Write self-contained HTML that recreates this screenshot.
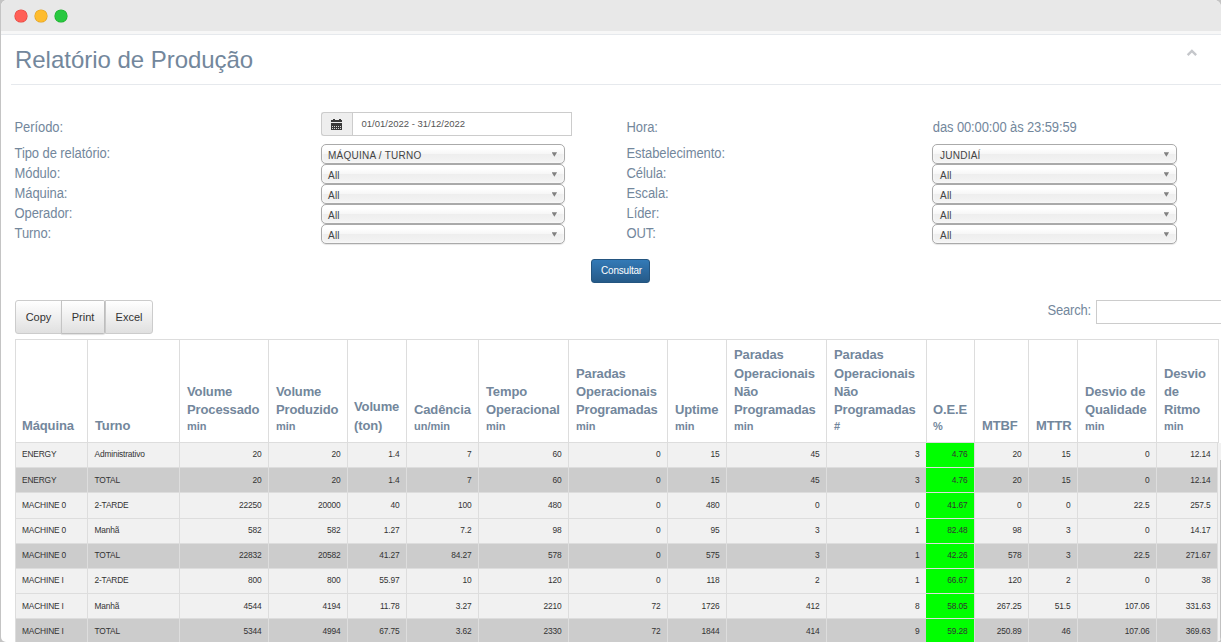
<!DOCTYPE html>
<html lang="pt-BR">
<head>
<meta charset="utf-8">
<title>Relatório de Produção</title>
<style>
*{box-sizing:border-box;margin:0;padding:0}
html,body{width:1221px;height:642px;overflow:hidden;background:#c4c4c4;font-family:"Liberation Sans",Arial,sans-serif;color:#73879C;font-size:13px}
#win{position:absolute;left:1px;top:0;width:1220px;height:642px;background:#fff;border-radius:6px 7px 5px 5px;overflow:hidden}
#chrome{position:absolute;left:0;top:0;width:100%;height:31px;background:#e8e8e8}
.dot{position:absolute;top:10px;width:12px;height:12px;border-radius:50%}
#strip{position:absolute;left:0;top:31px;width:100%;height:3px;background:#f7f7f7}
#ptop{position:absolute;left:0;top:34px;width:100%;height:1px;background:#E6E9ED}
#title{position:absolute;left:14px;top:46px;font-size:24px;line-height:28px;font-weight:400;color:#73879C;white-space:nowrap;letter-spacing:-0.03px}
#tline{position:absolute;left:10px;top:84px;right:0;height:1px;background:#E6E9ED}
#chev{position:absolute;left:1185px;top:48px}
.lbl{position:absolute;font-size:13px;line-height:16px;white-space:nowrap;color:#73879C;letter-spacing:-0.08px;margin:1px 0 0 .5px;transform:scaleY(1.075);transform-origin:0 12.3px}
.sel{position:absolute;width:244px;height:20px;border:1px solid #aaa;border-radius:5px;background:linear-gradient(#fff 20%,#f6f6f6 50%,#eee 52%,#f4f4f4 100%);box-shadow:0 0 3px #fff inset,0 1px 1px rgba(0,0,0,.1);color:#444;font-size:10px;line-height:22px;padding-left:6px;white-space:nowrap;letter-spacing:.24px}
.sel i{position:absolute;right:6.9px;top:7.3px;width:5.5px;height:4.4px;background:#808080;clip-path:polygon(0 0,100% 0,50% 100%)}
#dgrp{position:absolute;left:351px;top:112px;width:220px;height:24px;border:1px solid #ccc;background:#fff}
#dadd{position:absolute;left:320px;top:112px;width:31px;height:24px;background:#eee;border:1px solid #ccc;border-right:0;border-radius:3px 0 0 3px}
#dtxt{position:absolute;left:8.5px;top:0;font-size:9.5px;line-height:22px;color:#555;white-space:nowrap}
#btn{position:absolute;left:590px;top:259px;width:59px;height:24px;border:1px solid #245580;border-radius:3px;background:linear-gradient(#337ab7,#265a88);color:#fff;font-size:10px;letter-spacing:-.2px;padding-left:2px;line-height:22px;text-align:center}
.dtb{position:absolute;top:300px;height:34px;border:1px solid #ccc;background:linear-gradient(#fff,#e0e0e0);color:#333;font-size:11px;line-height:32px;text-align:center}
#srch{position:absolute;left:1046.6px;top:303px;font-size:13px;letter-spacing:-.2px;line-height:16px;color:#73879C;transform:scaleY(1.075);transform-origin:0 12.3px}
#sinp{position:absolute;left:1095px;top:300px;width:140px;height:24px;border:1px solid #ccc;background:#fff}
table{border-collapse:collapse;table-layout:fixed;position:absolute}
#th{left:14px;top:339px;width:1203px;z-index:2}
#tb{left:14px;top:442px;width:1202px}
th,td{border:1px solid #ddd;overflow:hidden}
th{height:103px;vertical-align:bottom;text-align:left;padding:0 0 6.5px 7px;font-size:13px;line-height:18.33px;font-weight:700;color:#73879C;white-space:nowrap;background:#fff;letter-spacing:-.13px}
th small{display:block;font-size:11px;line-height:13.2px;margin-bottom:2.6px;font-weight:700;letter-spacing:0}
td{height:25px;font-size:8.4px;letter-spacing:-.17px;line-height:12px;color:#333;padding:0 6.6px 1px 6px;text-align:right;white-space:nowrap;vertical-align:middle}
td.l{text-align:left}
tr.o td{background:#f1f1f1}
tr.f td{padding-top:0;padding-bottom:3px}
tr.h26 td{height:26px;padding-top:0;padding-bottom:2px}
td.l+td.l{padding-left:6.5px}
tr.t td{background:#ccc}
tr td.g{background:#00ff00}
#tb td:nth-child(11){border-right-color:#00ff00}
#rstrip{position:absolute;left:1217px;top:443px;width:3px;height:199px;background:#f1f1f1}
#thumb{position:absolute;left:1219px;top:460px;width:1px;height:182px;background:#c1c1c1}
</style>
</head>
<body>
<div id="win">
  <div id="chrome">
    <div class="dot" style="left:14px;background:#ff5f57;box-shadow:0 0 0 .6px #e0443e"></div>
    <div class="dot" style="left:34px;background:#febc2e;box-shadow:0 0 0 .6px #dea123"></div>
    <div class="dot" style="left:54px;background:#28c840;box-shadow:0 0 0 .6px #1aab29"></div>
  </div>
  <div id="strip"></div><div id="ptop"></div>
  <div id="title">Relatório de Produção</div>
  <svg id="chev" width="14" height="10" viewBox="0 0 14 10"><path d="M1.65 7.2 L5.9 3 L10.15 7.2" fill="none" stroke="#C5C7CB" stroke-width="2.4"/></svg>
  <div id="tline"></div>

  <div class="lbl" style="left:13px;top:119px">Período:</div>
  <div class="lbl" style="left:13px;top:145px">Tipo de relatório:</div>
  <div class="lbl" style="left:13px;top:165px">Módulo:</div>
  <div class="lbl" style="left:13px;top:185px">Máquina:</div>
  <div class="lbl" style="left:13px;top:205px">Operador:</div>
  <div class="lbl" style="left:13px;top:225px">Turno:</div>

  <div id="dadd"><svg width="11" height="11" viewBox="0 0 11 11" shape-rendering="crispEdges" style="position:absolute;left:9px;top:6px"><g fill="#3a3a3a"><rect x="1.5" y="0" width="2" height="1"/><rect x="7.5" y="0" width="2" height="1"/><rect x="0" y="1" width="11" height="2"/><rect x="0" y="4" width="11" height="7"/></g><g fill="#d8d8d8"><rect x="1" y="7" width="1" height="1"/><rect x="3" y="7" width="1" height="1"/><rect x="5" y="7" width="1" height="1"/><rect x="7" y="7" width="1" height="1"/><rect x="9" y="7" width="1" height="1"/><rect x="1" y="9" width="1" height="1"/><rect x="3" y="9" width="1" height="1"/><rect x="5" y="9" width="1" height="1"/><rect x="7" y="9" width="1" height="1"/><rect x="9" y="9" width="1" height="1"/></g></svg></div><div id="dgrp"><div id="dtxt">01/01/2022 - 31/12/2022</div></div>
  <div class="sel" style="left:320px;top:144px">MÁQUINA / TURNO<i></i></div>
  <div class="sel" style="left:320px;top:164px">All<i></i></div>
  <div class="sel" style="left:320px;top:184px">All<i></i></div>
  <div class="sel" style="left:320px;top:204px">All<i></i></div>
  <div class="sel" style="left:320px;top:224px">All<i></i></div>

  <div class="lbl" style="left:625px;top:119px">Hora:</div>
  <div class="lbl" style="left:625px;top:145px">Estabelecimento:</div>
  <div class="lbl" style="left:625px;top:165px">Célula:</div>
  <div class="lbl" style="left:625px;top:185px">Escala:</div>
  <div class="lbl" style="left:625px;top:205px">Líder:</div>
  <div class="lbl" style="left:625px;top:225px">OUT:</div>

  <div class="lbl" style="left:931.3px;top:119px;letter-spacing:-.12px">das 00:00:00 às 23:59:59</div>
  <div class="sel" style="left:931px;top:144px;width:245px;padding-left:7px">JUNDIAÍ<i></i></div>
  <div class="sel" style="left:931px;top:164px;width:245px;padding-left:7px">All<i></i></div>
  <div class="sel" style="left:931px;top:184px;width:245px;padding-left:7px">All<i></i></div>
  <div class="sel" style="left:931px;top:204px;width:245px;padding-left:7px">All<i></i></div>
  <div class="sel" style="left:931px;top:224px;width:245px;padding-left:7px">All<i></i></div>

  <div id="btn">Consultar</div>

  <div class="dtb" style="left:14px;width:47px;border-radius:3px 0 0 3px">Copy</div>
  <div class="dtb" style="left:60px;width:44px;border-color:#c4c4c4 #bdbdbd #bdbdbd #c4c4c4;border-radius:0 2px 2px 0;box-shadow:0 1px 1px rgba(0,0,0,.12);z-index:1">Print</div>
  <div class="dtb" style="left:104px;width:48px;border-radius:0 3px 3px 0">Excel</div>

  <div id="srch">Search:</div><div id="sinp"></div>

  <table id="th"><colgroup><col style="width:72px"><col style="width:92px"><col style="width:89px"><col style="width:79px"><col style="width:59px"><col style="width:72px"><col style="width:90px"><col style="width:99px"><col style="width:59px"><col style="width:100px"><col style="width:100px"><col style="width:48px"><col style="width:54px"><col style="width:49px"><col style="width:79px"><col style="width:62px"></colgroup>
  <tr>
    <th style="padding-left:6px">Máquina</th><th>Turno</th>
    <th>Volume<br>Processado<small>min</small></th>
    <th>Volume<br>Produzido<small>min</small></th>
    <th style="padding-left:6px"><span style="position:relative;top:-1px">Volume</span><br>(ton)</th>
    <th>Cadência<small>un/min</small></th>
    <th>Tempo<br>Operacional<small>min</small></th>
    <th>Paradas<br>Operacionais<br>Programadas<small>min</small></th>
    <th>Uptime<small>min</small></th>
    <th>Paradas<br>Operacionais<br>Não<br>Programadas<small>min</small></th>
    <th>Paradas<br>Operacionais<br>Não<br>Programadas<small>#</small></th>
    <th style="padding-left:6px">O.E.E<small>%</small></th>
    <th>MTBF</th><th>MTTR</th>
    <th>Desvio de<br>Qualidade<small>min</small></th>
    <th>Desvio<br>de<br>Ritmo<small>min</small></th>
  </tr></table>

  <table id="tb"><colgroup><col style="width:72px"><col style="width:92px"><col style="width:89px"><col style="width:79px"><col style="width:59px"><col style="width:72px"><col style="width:90px"><col style="width:99px"><col style="width:59px"><col style="width:100px"><col style="width:100px"><col style="width:48px"><col style="width:54px"><col style="width:49px"><col style="width:79px"><col style="width:61px"></colgroup>
  <tr class="o f"><td class="l">ENERGY</td><td class="l">Administrativo</td><td>20</td><td>20</td><td>1.4</td><td>7</td><td>60</td><td>0</td><td>15</td><td>45</td><td>3</td><td class="g">4.76</td><td>20</td><td>15</td><td>0</td><td>12.14</td></tr>
  <tr class="t"><td class="l">ENERGY</td><td class="l">TOTAL</td><td>20</td><td>20</td><td>1.4</td><td>7</td><td>60</td><td>0</td><td>15</td><td>45</td><td>3</td><td class="g">4.76</td><td>20</td><td>15</td><td>0</td><td>12.14</td></tr>
  <tr class="o h26"><td class="l">MACHINE 0</td><td class="l">2-TARDE</td><td>22250</td><td>20000</td><td>40</td><td>100</td><td>480</td><td>0</td><td>480</td><td>0</td><td>0</td><td class="g">41.67</td><td>0</td><td>0</td><td>22.5</td><td>257.5</td></tr>
  <tr class="o f"><td class="l">MACHINE 0</td><td class="l">Manhã</td><td>582</td><td>582</td><td>1.27</td><td>7.2</td><td>98</td><td>0</td><td>95</td><td>3</td><td>1</td><td class="g">82.48</td><td>98</td><td>3</td><td>0</td><td>14.17</td></tr>
  <tr class="t f"><td class="l">MACHINE 0</td><td class="l">TOTAL</td><td>22832</td><td>20582</td><td>41.27</td><td>84.27</td><td>578</td><td>0</td><td>575</td><td>3</td><td>1</td><td class="g">42.26</td><td>578</td><td>3</td><td>22.5</td><td>271.67</td></tr>
  <tr class="o f"><td class="l">MACHINE I</td><td class="l">2-TARDE</td><td>800</td><td>800</td><td>55.97</td><td>10</td><td>120</td><td>0</td><td>118</td><td>2</td><td>1</td><td class="g">66.67</td><td>120</td><td>2</td><td>0</td><td>38</td></tr>
  <tr class="o"><td class="l">MACHINE I</td><td class="l">Manhã</td><td>4544</td><td>4194</td><td>11.78</td><td>3.27</td><td>2210</td><td>72</td><td>1726</td><td>412</td><td>8</td><td class="g">58.05</td><td>267.25</td><td>51.5</td><td>107.06</td><td>331.63</td></tr>
  <tr class="t"><td class="l">MACHINE I</td><td class="l">TOTAL</td><td>5344</td><td>4994</td><td>67.75</td><td>3.62</td><td>2330</td><td>72</td><td>1844</td><td>414</td><td>9</td><td class="g">59.28</td><td>250.89</td><td>46</td><td>107.06</td><td>369.63</td></tr>
  </table>
  <div id="rstrip"></div><div id="thumb"></div>
</div>
</body>
</html>
